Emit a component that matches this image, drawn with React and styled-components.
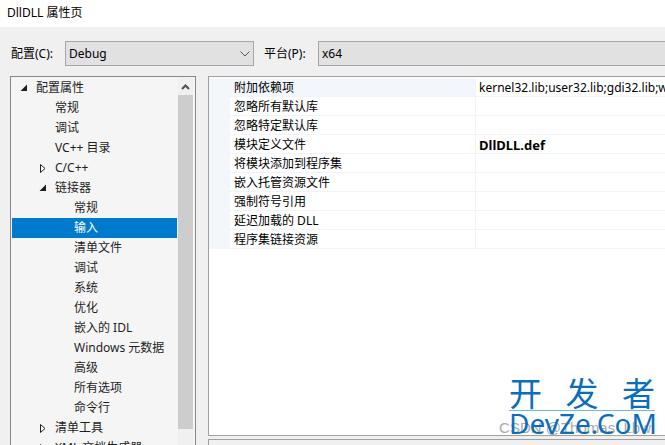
import styled, { createGlobalStyle } from "styled-components";

const GlobalStyle = createGlobalStyle`
  * { box-sizing: border-box; }

  body {
    margin: 0;
    background: #f0f0f0;
    color: #000;
    font-family: "Noto Sans", "Noto Sans CJK SC", sans-serif;
    font-size: 12px;
    line-height: 18px;
  }

  button, select {
    font: inherit;
    color: inherit;
  }
`;

const treeItems = [
  { label: "配置属性", level: 0, state: "open" },
  { label: "常规", level: 1 },
  { label: "调试", level: 1 },
  { label: "VC++ 目录", level: 1 },
  { label: "C/C++", level: 1, state: "closed" },
  { label: "链接器", level: 1, state: "open" },
  { label: "常规", level: 2 },
  { label: "输入", level: 2, selected: true },
  { label: "清单文件", level: 2 },
  { label: "调试", level: 2 },
  { label: "系统", level: 2 },
  { label: "优化", level: 2 },
  { label: "嵌入的 IDL", level: 2 },
  { label: "Windows 元数据", level: 2 },
  { label: "高级", level: 2 },
  { label: "所有选项", level: 2 },
  { label: "命令行", level: 2 },
  { label: "清单工具", level: 1, state: "closed" },
  { label: "XML 文档生成器", level: 1, state: "closed" },
];

const properties = [
  { name: "附加依赖项", value: "kernel32.lib;user32.lib;gdi32.lib;winspool.lib;comdlg32.lib", active: true },
  { name: "忽略所有默认库" },
  { name: "忽略特定默认库" },
  { name: "模块定义文件", value: "DllDLL.def", bold: true },
  { name: "将模块添加到程序集" },
  { name: "嵌入托管资源文件" },
  { name: "强制符号引用" },
  { name: "延迟加载的 DLL" },
  { name: "程序集链接资源" },
];

const Expander = ({ state }) => (
  <StyledExpander>
    {state === "open" && (
      <svg width="8" height="8" viewBox="0 0 8 8">
        <path d="M7 0.5V7H0.5Z" fill="#1e1e1e" />
      </svg>
    )}
    {state === "closed" && (
      <svg width="6" height="9" viewBox="0 0 6 9">
        <path d="M0.5 0.5L5 4.5L0.5 8.5Z" fill="#fff" stroke="#1e1e1e" />
      </svg>
    )}
  </StyledExpander>
);

const App = () => {
  return (
    <Dialog>
      <GlobalStyle />
      <TitleBar>DllDLL 属性页</TitleBar>

      <Toolbar>
        <Label htmlFor="configuration">配置(C):</Label>
        <SelectWrap>
          <Select id="configuration" defaultValue="Debug">
            <option>Debug</option>
            <option>Release</option>
          </Select>
          <Chevron width="10" height="6" viewBox="0 0 10 6">
            <path d="M0.5 0.5L5 5L9.5 0.5" fill="none" stroke="#555" />
          </Chevron>
        </SelectWrap>
        <Label htmlFor="platform">平台(P):</Label>
        <SelectWrap $wide>
          <Select id="platform" defaultValue="x64" $wide>
            <option>x64</option>
            <option>Win32</option>
          </Select>
        </SelectWrap>
      </Toolbar>

      <Content>
        <TreePanel>
          <Tree>
            {treeItems.map((item, i) => (
              <TreeRow key={i} $level={item.level} $selected={item.selected}>
                <Expander state={item.state} />
                {item.label}
              </TreeRow>
            ))}
          </Tree>
          <ScrollBar>
            <ScrollButton aria-label="向上滚动">
              <svg width="9" height="6" viewBox="0 0 9 6">
                <path d="M1 5L4.5 1.5L8 5" fill="none" stroke="#505050" strokeWidth="2" />
              </svg>
            </ScrollButton>
            <ScrollThumb />
          </ScrollBar>
        </TreePanel>

        <Details>
          <GridPanel>
            <PropertyTable>
              <tbody>
                {properties.map((p) => (
                  <tr key={p.name}>
                    <Gutter />
                    <NameCell scope="row" $active={p.active}>{p.name}</NameCell>
                    <ValueCell $bold={p.bold}>{p.value}</ValueCell>
                  </tr>
                ))}
              </tbody>
            </PropertyTable>
          </GridPanel>
          <Description />
        </Details>
      </Content>

      <Credit>CSDN @Thomas_Lbw</Credit>
      <Brand>
        <BrandTop>
          <span>开</span>
          <span>发</span>
          <span>者</span>
        </BrandTop>
        <BrandName>DevZe.CoM</BrandName>
      </Brand>
    </Dialog>
  );
};

export default App;

const Dialog = styled.main`
  position: relative;
  display: flex;
  flex-direction: column;
  height: 100vh;
  overflow: hidden;
`;

const TitleBar = styled.header`
  flex: none;
  padding: 4px 7px 5px;
  background: #fff;
`;

const Toolbar = styled.div`
  display: flex;
  flex: none;
  align-items: center;
  padding: 14px 0 10px 11px;
`;

const Label = styled.label`
  flex: none;
  width: 54px;
`;

const SelectWrap = styled.div`
  position: relative;
  flex: ${(props) => (props.$wide ? "1" : "0 0 189px")};
  margin-right: ${(props) => (props.$wide ? "0" : "10px")};
`;

const Select = styled.select`
  display: block;
  appearance: none;
  width: 100%;
  height: 25px;
  padding: 0 3px;
  border: 1px solid #a3a7ab;
  border-right-width: ${(props) => (props.$wide ? "0" : "1px")};
  border-radius: 0;
  background: #e1e1e2;
`;

const Chevron = styled.svg`
  position: absolute;
  top: 10px;
  right: 4px;
  pointer-events: none;
`;

const Content = styled.div`
  display: flex;
  flex: 1;
  gap: 12px;
  min-height: 0;
  padding-left: 10px;
`;

const TreePanel = styled.nav`
  display: flex;
  flex: none;
  width: 186px;
  padding: 1px 2px 0 1px;
  border: 1px solid #828790;
  border-bottom: 0;
  background: #f5f5f5;
  overflow: hidden;
`;

const Tree = styled.ul`
  flex: 1;
  margin: 0;
  padding: 0;
  list-style: none;
`;

const TreeRow = styled.li`
  display: flex;
  align-items: center;
  height: 20px;
  padding-left: ${(props) => 8 + props.$level * 19}px;
  color: ${(props) => (props.$selected ? "#fff" : "#1e1e1e")};
  background: ${(props) => (props.$selected ? "#007acc" : "transparent")};
  white-space: nowrap;
`;

const StyledExpander = styled.span`
  display: flex;
  justify-content: center;
  flex: none;
  width: 8px;
  margin-right: 8px;
`;

const ScrollBar = styled.div`
  display: flex;
  flex-direction: column;
  flex: none;
  width: 15px;
  margin-left: 1px;
  padding-bottom: 16px;
  background: #f0f0f0;
`;

const ScrollButton = styled.button`
  display: flex;
  align-items: center;
  justify-content: center;
  flex: none;
  height: 17px;
  padding: 0;
  border: 0;
  background: #f0f0f0;
`;

const ScrollThumb = styled.div`
  flex: 1;
  background: #cdcdcd;
`;

const Details = styled.section`
  display: flex;
  flex: 1;
  flex-direction: column;
  gap: 3px;
  min-width: 0;
`;

const GridPanel = styled.div`
  flex: 1;
  min-height: 0;
  padding-top: 1px;
  border: 1px solid #a0a0a0;
  border-right: 0;
  background: #fff;
  overflow: hidden;
`;

const PropertyTable = styled.table`
  width: 100%;
  table-layout: fixed;
  border-collapse: separate;
  border-spacing: 0;
  line-height: 16px;
`;

const Gutter = styled.td`
  width: 21px;
  padding: 0;
  background: #f3f7fc;
`;

const NameCell = styled.th`
  width: 246px;
  height: 19px;
  padding: 2px 4px 0;
  border-right: 1px solid #f0f4fa;
  border-bottom: 1px solid #f0f4fa;
  background: ${(props) => (props.$active ? "#f3f7fc" : "#fff")};
  font-weight: normal;
  text-align: left;
  white-space: nowrap;
`;

const ValueCell = styled.td`
  padding: 2px 3px 0;
  border-bottom: 1px solid #f0f4fa;
  font-size: ${(props) => (props.$bold ? "13px" : "12px")};
  font-weight: ${(props) => (props.$bold ? "bold" : "normal")};
  white-space: nowrap;
  overflow: hidden;
`;

const Description = styled.div`
  flex: none;
  height: 6px;
  border-top: 1px solid #a0a0a0;
  border-left: 1px solid #a0a0a0;
`;

const Credit = styled.div`
  position: absolute;
  right: 14px;
  bottom: 7px;
  color: #aaa;
  font-family: "Liberation Sans", Arial, sans-serif;
  font-size: 15px;
  line-height: 20px;
`;

const Brand = styled.div`
  position: absolute;
  right: 10px;
  bottom: 10px;
  width: 146px;
  color: #0a6ebd;
`;

const BrandTop = styled.div`
  display: flex;
  justify-content: space-between;
  border-bottom: 1px solid #6db9e8;
  font-size: 33px;
  line-height: 32px;
`;

const BrandName = styled.div`
  font-size: 28px;
  line-height: 24px;
`;
